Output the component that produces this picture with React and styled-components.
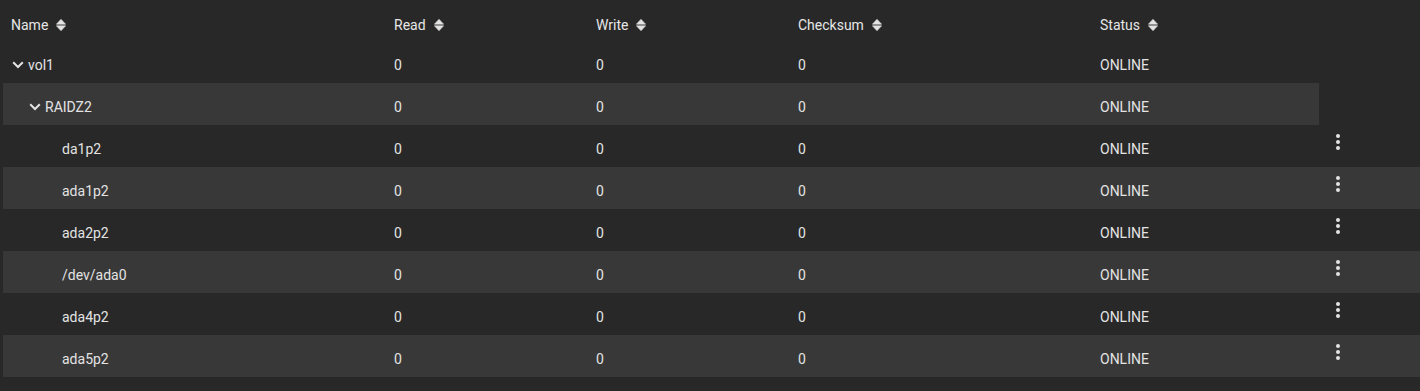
import React from "react";
import styled, { createGlobalStyle } from "styled-components";

const Global = createGlobalStyle`
  html, body { margin: 0; padding: 0; background: #282828; }
  body { font-family: Roboto, "Noto Sans", sans-serif; color: #e3e3e3; }
`;

const COLS = "383px 202px 202px 302px 227px 1fr";

const Table = styled.div`
  margin-left: 3px;
  width: 1417px;
  display: flex;
  flex-direction: column;
`;

const HeaderRow = styled.div`
  display: grid;
  grid-template-columns: ${COLS};
  height: 41px;
`;

const HeaderCell = styled.div`
  display: flex;
  align-items: center;
  padding: 9px 8px 0;
  font-size: 14px;
  font-weight: 400;
  color: #e6e6e6;
  gap: 8px;
`;

const Row = styled.div`
  display: grid;
  grid-template-columns: ${COLS};
  height: 42px;
`;

const Cell = styled.div`
  display: flex;
  align-items: center;
  padding: 6px 8px 0;
  font-size: 14px;
  background: ${(p) => (p.$striped ? "#383838" : "transparent")};
  white-space: nowrap;
`;

const NameCell = styled(Cell)`
  padding-left: ${(p) => 8 + p.$level * 17}px;
`;

const Toggle = styled.span`
  width: 17px;
  height: 14px;
  display: inline-flex;
  align-items: center;
  flex-shrink: 0;
  padding-left: 1px;
  box-sizing: border-box;
`;

const ActionCell = styled.div`
  display: flex;
  align-items: flex-start;
  padding: 5px 0 0 7px;
  background: ${(p) => (p.$striped ? "#383838" : "transparent")};
`;

const IconBox = styled.span`
  width: 24px;
  height: 24px;
  display: inline-flex;
`;

const SortIcon = () => (
  <svg width="10" height="12" viewBox="0 0 10 12">
    <path d="M5 0.3 L9.6 5.2 L0.4 5.2 Z" fill="#e3e3e3" strokeLinejoin="round" stroke="#e3e3e3" strokeWidth="0.6" />
    <path d="M5 11.7 L9.6 6.8 L0.4 6.8 Z" fill="#e3e3e3" strokeLinejoin="round" stroke="#e3e3e3" strokeWidth="0.6" />
  </svg>
);

const Chevron = () => (
  <svg width="12" height="8" viewBox="0 0 12 8">
    <path d="M1.2 1.2 L6 6 L10.8 1.2" fill="none" stroke="#e3e3e3" strokeWidth="2" />
  </svg>
);

const MoreVert = () => (
  <svg width="24" height="24" viewBox="0 0 24 24">
    <circle cx="12" cy="6" r="2" fill="#e3e3e3" />
    <circle cx="12" cy="12" r="2" fill="#e3e3e3" />
    <circle cx="12" cy="18" r="2" fill="#e3e3e3" />
  </svg>
);

const rows = [
  { name: "vol1", level: 0, toggle: true, action: false },
  { name: "RAIDZ2", level: 1, toggle: true, action: false },
  { name: "da1p2", level: 2, action: true },
  { name: "ada1p2", level: 2, action: true },
  { name: "ada2p2", level: 2, action: true },
  { name: "/dev/ada0", level: 2, action: true },
  { name: "ada4p2", level: 2, action: true },
  { name: "ada5p2", level: 2, action: true },
];

const headers = ["Name", "Read", "Write", "Checksum", "Status"];

export default function App() {
  return (
    <>
      <Global />
      <Table>
        <HeaderRow>
          {headers.map((h) => (
            <HeaderCell key={h}>
              {h}
              <SortIcon />
            </HeaderCell>
          ))}
          <HeaderCell />
        </HeaderRow>
        {rows.map((r, i) => {
          const s = i % 2 === 1;
          return (
            <Row key={r.name}>
              <NameCell $striped={s} $level={r.level}>
                <Toggle>{r.toggle ? <Chevron /> : null}</Toggle>
                {r.name}
              </NameCell>
              <Cell $striped={s}>0</Cell>
              <Cell $striped={s}>0</Cell>
              <Cell $striped={s}>0</Cell>
              <Cell $striped={s}>ONLINE</Cell>
              <ActionCell $striped={s && r.action}>
                {r.action ? (
                  <IconBox>
                    <MoreVert />
                  </IconBox>
                ) : null}
              </ActionCell>
            </Row>
          );
        })}
      </Table>
    </>
  );
}
